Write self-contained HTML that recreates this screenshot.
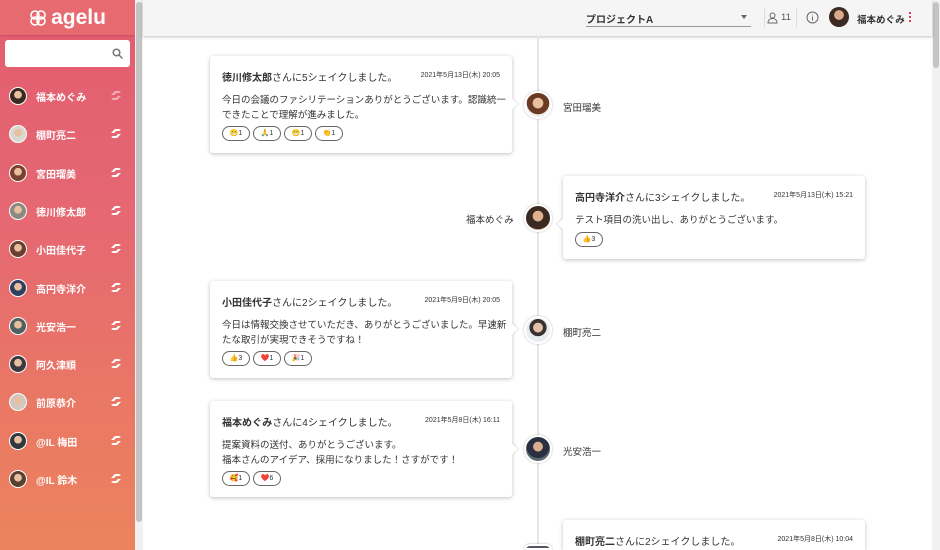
<!DOCTYPE html>
<html style="width:940px;height:550px;overflow:hidden"><head><meta charset="utf-8"><style>
*{margin:0;padding:0;box-sizing:border-box}
body{width:940px;height:550px;overflow:hidden;background:#fff;font-family:"Liberation Sans","Noto Sans CJK JP",sans-serif;color:#333;position:relative}
#wrap{position:absolute;left:0;top:0;width:940px;height:550px;overflow:hidden}
#side{position:absolute;left:0;top:0;width:135px;height:550px;background:linear-gradient(180deg,#e35c70 0%,#e56872 40%,#ea7b62 80%,#ec835e 100%)}
#logo{height:35px;background:#e66a70;box-shadow:0 1px 2px rgba(0,0,0,.15);color:#fff;font-weight:bold;font-size:21px;display:flex;align-items:center;justify-content:center;gap:4px}
#search{position:absolute;left:5px;top:40px;width:125px;height:27px;background:#fff;border-radius:3px}
.it{position:absolute;left:0;width:135px;height:30px;color:#fff;font-size:10px;font-weight:bold}
.it .av{position:absolute;left:9px;top:6px;width:18px;height:18px}
.it span{position:absolute;left:36px;top:8px}
.it svg.sh{position:absolute;left:110px;top:9px}
.av{border-radius:50%;border:1.5px solid #fff;overflow:hidden}
#sb1{position:absolute;left:135px;top:0;width:8px;height:550px;background:#f1f1f1}
#sb1 i{position:absolute;left:1px;top:2px;width:6px;height:520px;background:#c4c4c4;border-radius:3px}
#sb2{position:absolute;left:932px;top:0;width:8px;height:550px;background:#f1f1f1}
#sb2 i{position:absolute;left:1px;top:2px;width:6px;height:66px;background:#c4c4c4;border-radius:3px}
#hdr{position:absolute;left:143px;top:0;width:789px;height:36px;background:#f5f5f5;box-shadow:0 1px 3px rgba(0,0,0,.25);font-size:10px;font-weight:bold}
#line{position:absolute;left:537px;top:36px;width:2px;height:514px;background:#e6e6e6}
.card{position:absolute;width:302px;background:#fff;border-radius:3px;box-shadow:0 1px 4px rgba(0,0,0,.25);padding:0 12px}
.card .t{position:absolute;left:12px;top:13px;font-size:10px;font-weight:bold;color:#333}
.card .t em{font-style:normal;font-weight:normal}
.card .d{position:absolute;right:12px;top:14px;font-size:7px;color:#333}
.card .b{position:absolute;left:12px;top:37px;font-size:9.5px;line-height:15px;width:288px}
.chips{position:absolute;left:12px;display:flex;gap:3px}
.chips i{display:block;width:28px;height:15px;border:1px solid #666;border-radius:8px;font-style:normal;font-size:7px;text-align:center;line-height:13px}
.card:after{content:"";position:absolute;top:44px;width:8px;height:8px;background:#fff;transform:rotate(45deg)}
.L:after{right:-4px;box-shadow:1px -1px 1px rgba(0,0,0,.1)}
.R:after{left:-4px;box-shadow:-1px 1px 1px rgba(0,0,0,.1)}
.tav{position:absolute;left:524px;width:28px;height:28px;border:2px solid #fff;box-shadow:0 0 2px rgba(0,0,0,.3);border-radius:50%}
.nm{position:absolute;font-size:9.5px;color:#333}
</style></head><body><div id="wrap">
<div id="side">
<div id="logo"><svg width="18" height="18" viewBox="0 0 18 18" fill="none" stroke="#fff" stroke-width="1.6"><circle cx="6" cy="6" r="4"/><circle cx="12" cy="6" r="4"/><circle cx="6" cy="12" r="4"/><circle cx="12" cy="12" r="4"/></svg>agelu</div>
<div id="search"><svg style="position:absolute;left:107px;top:8px" width="11" height="11" viewBox="0 0 11 11" fill="none" stroke="#777" stroke-width="1.5"><circle cx="4.5" cy="4.5" r="3.3"/><path d="M7 7l3.5 3.5"/></svg></div>
</div>
<div id="sb1"><i></i></div><div id="sb2"><i></i></div>
<div id="hdr">
<div style="position:absolute;left:443px;top:11px;color:#333">プロジェクトA</div>
<div style="position:absolute;left:443px;top:26px;width:165px;height:1px;background:#999"></div>
<div style="position:absolute;left:598px;top:15px;border:3px solid transparent;border-top:4px solid #666"></div>
<div style="position:absolute;left:621px;top:8px;width:1px;height:20px;background:#ddd"></div>
<svg style="position:absolute;left:624px;top:12px" width="11" height="12" viewBox="0 0 11 12" fill="none" stroke="#666" stroke-width="1"><circle cx="5.5" cy="3.5" r="2.5"/><path d="M1 11c0-3 2-4.5 4.5-4.5S10 8 10 11z"/></svg>
<div style="position:absolute;left:638px;top:12px;font-weight:normal;color:#555;font-size:9.5px">11</div>
<div style="position:absolute;left:653px;top:8px;width:1px;height:20px;background:#ddd"></div>
<svg style="position:absolute;left:663px;top:11px" width="13" height="13" viewBox="0 0 13 13" fill="none" stroke="#666" stroke-width="1"><circle cx="6.5" cy="6.5" r="5.5"/><path d="M6.5 5.5v4M6.5 3.5v.8"/></svg>
<div style="position:absolute;left:686px;top:7px;width:20px;height:20px;border-radius:50%;background:radial-gradient(circle at 50% 40%,#d9a98a 0 30%,#3a2a22 32%)"></div>
<div style="position:absolute;left:714px;top:12px;color:#333;font-size:9.5px">福本めぐみ</div>
<div style="position:absolute;left:766px;top:12px;width:2px;height:12px;background:repeating-linear-gradient(#e04050 0 2px,transparent 2px 4px)"></div>
</div>
<div id="line"></div>

<div class="card L" style="left:210px;top:56px;height:97px"><div class="t">徳川修太郎<em>さんに5シェイクしました。</em></div><div class="d">2021年5月13日(木) 20:05</div><div class="b">今日の会議のファシリテーションありがとうございます。認識統一できたことで理解が進みました。</div><div class="chips" style="top:70px"><i>😁1</i><i>🙏1</i><i>😁1</i><i>👏1</i></div></div>
<div class="tav" style="top:91px;background:radial-gradient(circle at 50% 42%,#e8c0a0 0 28%,#6b3a22 30% 60%,#eee 62%)"></div>
<div class="nm" style="left:563px;top:100px">宮田瑠美</div>

<div class="card R" style="left:563px;top:176px;height:83px"><div class="t">高円寺洋介<em>さんに3シェイクしました。</em></div><div class="d">2021年5月13日(木) 15:21</div><div class="b">テスト項目の洗い出し、ありがとうございます。</div><div class="chips" style="top:56px"><i>👍3</i></div></div>
<div class="tav" style="top:204px;background:radial-gradient(circle at 50% 42%,#e0b090 0 28%,#3a2a22 30% 70%,#caa080 72%)"></div>
<div class="nm" style="left:466px;top:212px">福本めぐみ</div>

<div class="card L" style="left:210px;top:281px;height:97px"><div class="t">小田佳代子<em>さんに2シェイクしました。</em></div><div class="d">2021年5月9日(木) 20:05</div><div class="b">今日は情報交換させていただき、ありがとうございました。早速新たな取引が実現できそうですね！</div><div class="chips" style="top:70px"><i>👍3</i><i>❤️1</i><i>🎉1</i></div></div>
<div class="tav" style="top:316px;background:radial-gradient(circle at 50% 40%,#e0c0a8 0 25%,#3a3030 27% 45%,#e8eef0 47%)"></div>
<div class="nm" style="left:563px;top:325px">棚町亮二</div>

<div class="card L" style="left:210px;top:401px;height:96px"><div class="t">福本めぐみ<em>さんに4シェイクしました。</em></div><div class="d">2021年5月8日(木) 16:11</div><div class="b">提案資料の送付、ありがとうございます。<br>福本さんのアイデア、採用になりました！さすがです！</div><div class="chips" style="top:70px"><i>🥰1</i><i>❤️6</i></div></div>
<div class="tav" style="top:435px;background:radial-gradient(circle at 50% 40%,#d8b090 0 25%,#2a3040 27% 60%,#5a6a70 62%)"></div>
<div class="nm" style="left:563px;top:444px">光安浩一</div>

<div class="card R" style="left:563px;top:520px;height:30px;border-radius:3px 3px 0 0"><div class="t">棚町亮二<em>さんに2シェイクしました。</em></div><div class="d">2021年5月8日(木) 10:04</div></div>
<div class="tav" style="top:544px;height:6px;border-radius:14px 14px 0 0;background:#556"></div>
</div>
<script>
var n=["福本めぐみ","棚町亮二","宮田瑠美","徳川修太郎","小田佳代子","高円寺洋介","光安浩一","阿久津順","前原恭介","@IL 梅田","@IL 鈴木"];
var c=["#3a2a22","#d8d8d0","#7a4030","#8a8a80","#6a4030","#304060","#506060","#3a3a40","#d0c8c0","#303840","#5a4030"];
var h="";
for(var i=0;i<n.length;i++){var y=81+i*38.3;
h+='<div class="it" style="top:'+y+'px"><div class="av" style="background:radial-gradient(circle at 50% 42%,#e8c0a0 0 30%,'+c[i]+' 33%)"></div><span>'+n[i]+'</span><svg class="sh" width="12" height="11" viewBox="0 0 12 11" fill="'+(i==0?'rgba(255,255,255,.5)':'#fff')+'"><path d="M1 5l4-4h4l2 1-2 1H6L4 5zM11 6l-4 4H3L1 9l2-1h3l2-2z"/></svg></div>';}
document.getElementById("side").insertAdjacentHTML("beforeend",h);
</script>
</body></html>
